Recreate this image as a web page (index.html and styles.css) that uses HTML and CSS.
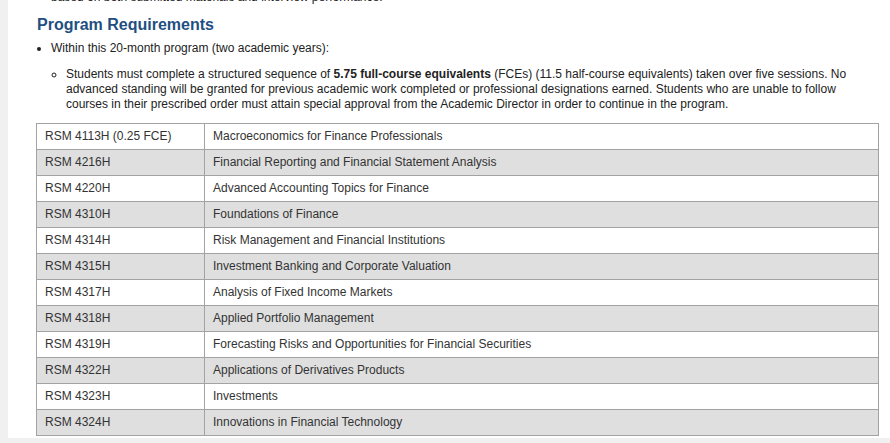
FILE: index.html
```html
<!DOCTYPE html>
<html lang="en">
<head>
<meta charset="utf-8">
<title>Program Requirements</title>
<link rel="stylesheet" href="styles.css">
</head>
<body>
<div class="panel">
  <div class="content">
    <ul class="list">
      <li>based on both submitted materials and interview performance.</li>
    </ul>
    <h2 class="heading">Program Requirements</h2>
    <ul class="list">
      <li>Within this 20-month program (two academic years):
        <ul class="sublist">
          <li>Students must complete a structured sequence of <strong>5.75 full-course equivalents</strong> (FCEs) (11.5 half-course equivalents) taken over five sessions. No advanced standing will be granted for previous academic work completed or professional designations earned. Students who are unable to follow courses in their prescribed order must attain special approval from the Academic Director in order to continue in the program.</li>
        </ul>
      </li>
    </ul>
    <table class="courses">
      <colgroup><col class="c1"><col class="c2"></colgroup>
      <tbody>
        <tr><td>RSM 4113H (0.25 FCE)</td><td>Macroeconomics for Finance Professionals</td></tr>
        <tr><td>RSM 4216H</td><td>Financial Reporting and Financial Statement Analysis</td></tr>
        <tr><td>RSM 4220H</td><td>Advanced Accounting Topics for Finance</td></tr>
        <tr><td>RSM 4310H</td><td>Foundations of Finance</td></tr>
        <tr><td>RSM 4314H</td><td>Risk Management and Financial Institutions</td></tr>
        <tr><td>RSM 4315H</td><td>Investment Banking and Corporate Valuation</td></tr>
        <tr><td>RSM 4317H</td><td>Analysis of Fixed Income Markets</td></tr>
        <tr><td>RSM 4318H</td><td>Applied Portfolio Management</td></tr>
        <tr><td>RSM 4319H</td><td>Forecasting Risks and Opportunities for Financial Securities</td></tr>
        <tr><td>RSM 4322H</td><td>Applications of Derivatives Products</td></tr>
        <tr><td>RSM 4323H</td><td>Investments</td></tr>
        <tr><td>RSM 4324H</td><td>Innovations in Financial Technology</td></tr>
      </tbody>
    </table>
  </div>
</div>
</body>
</html>
```
FILE: styles.css
```css
html, body {
  margin: 0;
  padding: 0;
  background: #f0f0f0;
  font-family: "Liberation Sans", Arial, sans-serif;
  font-size: 12px;
  color: #222;
}
.panel {
  margin-left: 8px;
  background: #fff;
  height: 438px;
  overflow: hidden;
  padding: 0 12px 0 28px;
}
.content {
  margin-top: -10px;
}
.list {
  margin: 0;
  padding-left: 15px;
  line-height: 15px;
  list-style: disc;
}
.sublist {
  margin: 11px 0 0 0;
  padding-left: 15px;
  list-style: circle;
}
.heading {
  margin: 10px 0 6px 1px;
  font-size: 16px;
  line-height: 20px;
  font-weight: bold;
  color: #1f4f82;
}
.courses {
  margin-top: 11px;
  width: 843px;
  border-collapse: collapse;
  table-layout: fixed;
  color: #333;
}
.c1 { width: 168px; }
.courses td {
  border: 1px solid #a3a3a3;
  padding: 5px 8px 5px 8px;
  line-height: 15px;
  height: 15px;
}
.courses tr:nth-child(even) td {
  background: #dfdfdf;
}
```
